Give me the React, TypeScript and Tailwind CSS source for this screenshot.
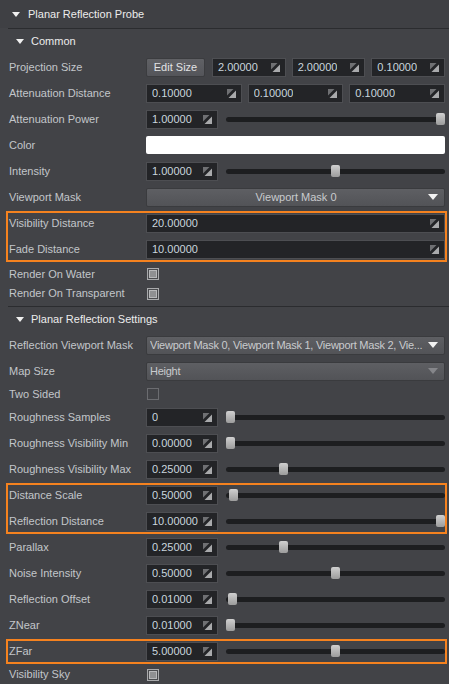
import React from 'react';

const SpinIcon = () => (
  <svg width="9" height="9" viewBox="0 0 9 9" className="shrink-0">
    <polygon points="0,0 6.5,0 0,6.5" fill="#6f7073" />
    <polygon points="9,9 1.5,9 9,1.5" fill="#a9aaac" />
  </svg>
);

const DownTri = ({ color = '#f0f0f0', w = 10, h = 6 }: { color?: string; w?: number; h?: number }) => (
  <svg width={w} height={h} viewBox={`0 0 ${w} ${h}`} className="shrink-0">
    <polygon points={`0,0 ${w},0 ${w / 2},${h}`} fill={color} />
  </svg>
);

function NumInput({ value, className = '' }: { value: string; className?: string }) {
  return (
    <div
      className={`h-[19px] flex items-center justify-between bg-[#232427] border border-[#4d4e52] pl-[5px] pr-[5px] text-[#c9d6de] ${className}`}
    >
      <span className="whitespace-nowrap overflow-hidden">{value}</span>
      <SpinIcon />
    </div>
  );
}

function Slider({ value, pos }: { value: string; pos: number }) {
  return (
    <div className="flex items-center w-full">
      <NumInput value={value} className="w-[72px] shrink-0" />
      <div className="relative flex-1 ml-[8px] h-[12px] flex items-center">
        <div className="w-full h-[5px] rounded-full bg-[#1d1e20]" />
        <div
          className="absolute top-0 w-[9px] h-[12px] rounded-[2px] bg-gradient-to-b from-[#d0d0d0] to-[#9c9c9c]"
          style={{ left: `calc(${pos} * (100% - 9px))` }}
        />
      </div>
    </div>
  );
}

function Check({ on }: { on: boolean }) {
  return on ? (
    <div className="w-[12px] h-[12px] border border-[#a9aaac] bg-[#4a4b4e] flex items-center justify-center">
      <div className="w-[8px] h-[8px] bg-[#8f9092] border border-[#b7b8ba]" />
    </div>
  ) : (
    <div className="w-[12px] h-[12px] border border-[#6b6c70]" />
  );
}

function Row({ label, children, h = 'h-[26px]' }: { label: string; children?: React.ReactNode; h?: string }) {
  return (
    <div className={`flex items-center ${h}`}>
      <div className="w-[146px] shrink-0 pl-[9px] truncate text-[#c3c6ca]">{label}</div>
      <div className="flex-1 pr-[4px] flex items-center min-w-0">{children}</div>
    </div>
  );
}

function Highlight({ children }: { children: React.ReactNode }) {
  return (
    <div className="relative">
      {children}
      <div className="absolute left-[6px] right-[2px] top-[1px] bottom-[0px] border-2 border-[#f5821f] pointer-events-none" />
    </div>
  );
}

function Dropdown({ text, center = false, arrow = '#f2f2f2' }: { text: string; center?: boolean; arrow?: string }) {
  return (
    <div className="w-full h-[19px] flex items-center rounded-[2px] border border-[#3a3b3e] bg-gradient-to-b from-[#5e5f63] to-[#525357] pl-[3px] pr-[6px] text-[#c9cbce]">
      <span className={`flex-1 whitespace-nowrap overflow-hidden ${center ? 'text-center pl-[14px]' : 'tracking-[-0.25px]'}`}>{text}</span>
      <DownTri color={arrow} />
    </div>
  );
}

function Section({ title, indent }: { title: string; indent: string }) {
  return (
    <div className={`flex items-center h-[25px] ${indent} gap-[7px] text-[#ececec]`}>
      <DownTri w={8} h={5} />
      <span>{title}</span>
    </div>
  );
}

export default function App() {
  return (
    <div
      className="w-[449px] h-[684px] overflow-hidden bg-[#424347] text-[11px] leading-none"
      style={{ fontFamily: '"Liberation Sans", Arial, sans-serif' }}
    >
      {/* Top header */}
      <div className="flex items-center h-[28px] pl-[12px] gap-[8px] text-[#ececec] bg-[#3f4044]">
        <DownTri w={8} h={5} />
        <span>Planar Reflection Probe</span>
      </div>
      <div className="ml-[8px] h-[1px] bg-[#2b2c2f]" />

      <Section title="Common" indent="pl-[16px]" />
      <Row label="Projection Size">
        <div className="w-[59px] h-[19px] shrink-0 rounded-[2px] bg-gradient-to-b from-[#606165] to-[#54555a] border border-[#3b3c3f] flex items-center justify-center text-[#e2e3e5]">
          Edit Size
        </div>
        <div className="flex-1 flex gap-[6px] ml-[7px]">
          <NumInput value="2.00000" className="flex-1" />
          <NumInput value="2.00000" className="flex-1" />
          <NumInput value="0.10000" className="flex-1" />
        </div>
      </Row>
      <Row label="Attenuation Distance">
        <div className="flex-1 flex gap-[6px]">
          <NumInput value="0.10000" className="flex-1" />
          <NumInput value="0.10000" className="flex-1" />
          <NumInput value="0.10000" className="flex-1" />
        </div>
      </Row>
      <Row label="Attenuation Power">
        <Slider value="1.00000" pos={1} />
      </Row>
      <Row label="Color">
        <div className="w-full h-[18px] rounded-[2px] bg-white" />
      </Row>
      <Row label="Intensity">
        <Slider value="1.00000" pos={0.5} />
      </Row>
      <Row label="Viewport Mask">
        <Dropdown text="Viewport Mask 0" center />
      </Row>
      <Highlight>
        <Row label="Visibility Distance">
          <NumInput value="20.00000" className="w-full" />
        </Row>
        <Row label="Fade Distance">
          <NumInput value="10.00000" className="w-full" />
        </Row>
      </Highlight>
      <Row label="Render On Water" h="h-[22px] pt-[2px]">
        <div className="pl-[1px]"><Check on /></div>
      </Row>
      <Row label="Render On Transparent" h="h-[19px]">
        <div className="pl-[1px]"><Check on /></div>
      </Row>

      <div className="mt-[3px] ml-[8px] h-[1px] bg-[#2b2c2f]" />
      <Section title="Planar Reflection Settings" indent="pl-[16px]" />
      <Row label="Reflection Viewport Mask">
        <Dropdown text="Viewport Mask 0, Viewport Mask 1, Viewport Mask 2, Vie..." />
      </Row>
      <Row label="Map Size">
        <Dropdown text="Height" arrow="#85868a" />
      </Row>
      <Row label="Two Sided" h="h-[20px]">
        <div className="pl-[1px]"><Check on={false} /></div>
      </Row>
      <Row label="Roughness Samples">
        <Slider value="0" pos={0} />
      </Row>
      <Row label="Roughness Visibility Min">
        <Slider value="0.00000" pos={0} />
      </Row>
      <Row label="Roughness Visibility Max">
        <Slider value="0.25000" pos={0.25} />
      </Row>
      <Highlight>
        <Row label="Distance Scale">
          <Slider value="0.50000" pos={0.012} />
        </Row>
        <Row label="Reflection Distance">
          <Slider value="10.00000" pos={1} />
        </Row>
      </Highlight>
      <Row label="Parallax">
        <Slider value="0.25000" pos={0.25} />
      </Row>
      <Row label="Noise Intensity">
        <Slider value="0.50000" pos={0.5} />
      </Row>
      <Row label="Reflection Offset">
        <Slider value="0.01000" pos={0.01} />
      </Row>
      <Row label="ZNear">
        <Slider value="0.01000" pos={0} />
      </Row>
      <Highlight>
        <Row label="ZFar">
          <Slider value="5.00000" pos={0.5} />
        </Row>
      </Highlight>
      <Row label="Visibility Sky" h="h-[21px]">
        <div className="pl-[1px]"><Check on /></div>
      </Row>
    </div>
  );
}
